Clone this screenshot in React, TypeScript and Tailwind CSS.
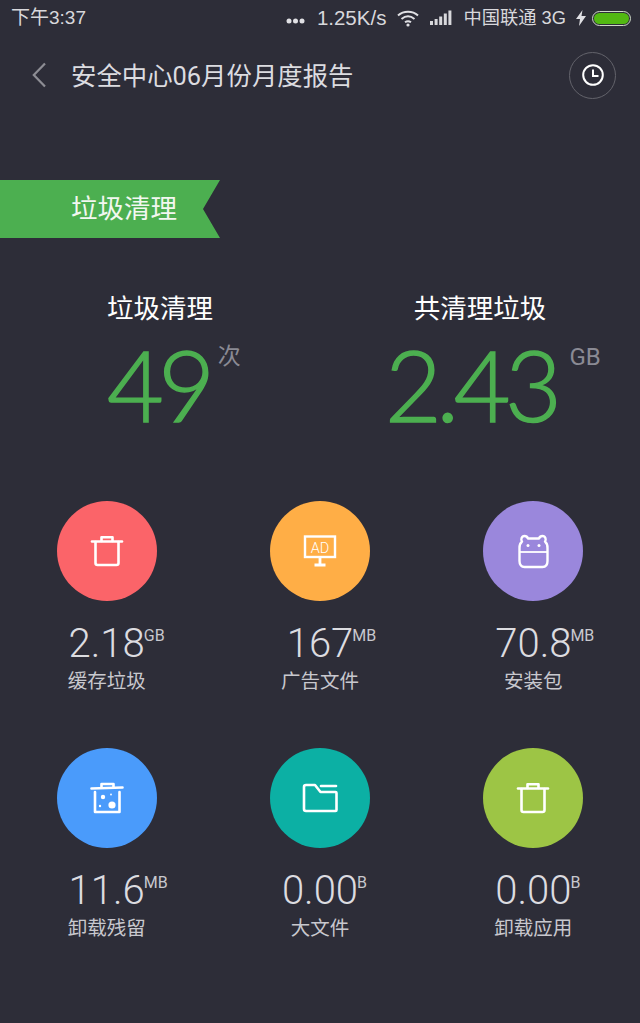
import { ReactNode } from "react";

function TrashIcon() {
  return (
    <svg width="34" height="34" viewBox="0 0 34 34" fill="none" stroke="#fff" strokeWidth="2.6" strokeLinejoin="round" strokeLinecap="round">
      <path d="M2 7.5h30" />
      <path d="M11.5 7V3.2h11V7" />
      <path d="M5.5 8v21a2 2 0 0 0 2 2h19a2 2 0 0 0 2-2V8" />
    </svg>
  );
}

function AdIcon() {
  return (
    <svg width="34" height="34" viewBox="0 0 34 34" fill="none">
      <rect x="2" y="2.5" width="30" height="20.5" stroke="#fff" strokeWidth="2.4" />
      <path d="M17 23v8M11.5 31h11" stroke="#fff" strokeWidth="2.8" />
      <text x="17" y="18.5" textAnchor="middle" fill="#fff" fontSize="14.5" fontFamily="Roboto, sans-serif" fontWeight="300">AD</text>
    </svg>
  );
}

function AndroidIcon() {
  return (
    <svg width="31" height="35" viewBox="0 0 31 35" fill="none" stroke="#fff" strokeWidth="2.4" strokeLinejoin="round">
      <path d="M4 7.5C2.5 6 3.5 2 6.5 2 8.5 2 9.5 3.2 10 4.5H21C21.5 3.2 22.5 2 24.5 2 27.5 2 28.5 6 27 7.5 28.8 9 29.5 11 29.5 14V27C29.5 31 27.5 33 24.5 33H6.5C3.5 33 1.5 31 1.5 27V14C1.5 11 2.2 9 4 7.5Z" />
      <path d="M1.5 18h28" strokeWidth="1.8" />
      <circle cx="10" cy="11.5" r="1.5" fill="#fff" stroke="none" />
      <circle cx="21" cy="11.5" r="1.5" fill="#fff" stroke="none" />
    </svg>
  );
}

function ResidueIcon() {
  return (
    <svg width="34" height="34" viewBox="0 0 34 34" fill="none" stroke="#fff" strokeWidth="2.6" strokeLinejoin="round" strokeLinecap="round">
      <path d="M1.5 7.5l31-1" />
      <path d="M11.5 6.5V3h12v3" />
      <path d="M5 11v20h24.5V11" />
      <circle cx="13" cy="16" r="2.2" fill="#fff" stroke="none" />
      <circle cx="22" cy="24" r="3.6" fill="#fff" stroke="none" />
      <circle cx="10" cy="25" r="1.2" fill="#fff" stroke="none" />
      <circle cx="21" cy="13.5" r="0.9" fill="#fff" stroke="none" />
    </svg>
  );
}

function FolderIcon() {
  return (
    <svg width="36" height="30" viewBox="0 0 36 30" fill="none" stroke="#fff" strokeWidth="2.6" strokeLinejoin="round" strokeLinecap="round">
      <path d="M2 4a2 2 0 0 1 2-2h9l5.5 7H33.5a1 1 0 0 1 1 1v17a1 1 0 0 1-1 1H4a2 2 0 0 1-2-2Z" />
      <path d="M19 3h15" />
    </svg>
  );
}

const items: { value: string; unit: string; label: string; color: string; icon: ReactNode }[] = [
  { value: "2.18", unit: "GB", label: "缓存垃圾", color: "bg-[#fb6469]", icon: <TrashIcon /> },
  { value: "167", unit: "MB", label: "广告文件", color: "bg-[#ffae46]", icon: <AdIcon /> },
  { value: "70.8", unit: "MB", label: "安装包", color: "bg-[#9a87dc]", icon: <AndroidIcon /> },
  { value: "11.6", unit: "MB", label: "卸载残留", color: "bg-[#4a9bfb]", icon: <ResidueIcon /> },
  { value: "0.00", unit: "B", label: "大文件", color: "bg-[#0cb0a4]", icon: <FolderIcon /> },
  { value: "0.00", unit: "B", label: "卸载应用", color: "bg-[#9dc545]", icon: <TrashIcon /> },
];

function StatusBar() {
  return (
    <div className="h-[36px] flex items-center pl-[11px] pr-[9px] text-[19px] text-[#d8d8dc] font-['Liberation_Sans','Noto_Sans_CJK_SC',sans-serif]">
      <span>下午3:37</span>
      <div className="ml-auto flex items-center">
        <svg width="19" height="6" viewBox="0 0 19 6" fill="#e0e0e4" className="mt-[5px]">
          <circle cx="3" cy="3" r="2.5" />
          <circle cx="9.5" cy="3" r="2.5" />
          <circle cx="16" cy="3" r="2.5" />
        </svg>
        <span className="ml-[12px] text-[20.5px]">1.25K/s</span>
        <svg width="22" height="17" viewBox="0 0 22 17" fill="none" stroke="#e0e0e4" strokeWidth="2" className="ml-[11px]">
          <path d="M1 5.5C6.5 .5 15.5 .5 21 5.5" />
          <path d="M4.5 9c4-3.3 9-3.3 13 0" />
          <path d="M8 12.2c2-1.4 4-1.4 6 0" />
          <circle cx="11" cy="15" r="1.6" fill="#e0e0e4" stroke="none" />
        </svg>
        <svg width="22" height="16" viewBox="0 0 22 16" fill="#d8d8dc" className="ml-[11px]">
          <rect x="0" y="11" width="3" height="4" />
          <rect x="4.6" y="9" width="3" height="6" />
          <rect x="9.2" y="6.5" width="3" height="8.5" />
          <rect x="13.8" y="3.5" width="3" height="11.5" />
          <rect x="18.4" y="0.5" width="3" height="14.5" />
        </svg>
        <span className="ml-[11px] text-[18.3px]">中国联通 3G</span>
        <svg width="10" height="16" viewBox="0 0 10 16" fill="#e0e0e4" className="ml-[10px]">
          <path d="M6.5 0 0 9h4l-1 7 7-10H5.5Z" />
        </svg>
        <div className="ml-[6px] w-[39px] h-[15px] rounded-full border border-[#cfd8c8] p-[1px]">
          <div className="w-full h-full rounded-full bg-[#52b812]" />
        </div>
      </div>
    </div>
  );
}

export default function App() {
  return (
    <div className="w-[640px] h-[1023px] overflow-hidden bg-[#2d2d38] text-[#dcdce0] font-['Roboto','Noto_Sans_CJK_SC',sans-serif]">
      <StatusBar />

      {/* Header */}
      <div className="h-[78px] flex items-center pl-[32px] pr-[24px]">
        <svg width="14" height="26" viewBox="0 0 14 26" fill="none" stroke="#8d8d94" strokeWidth="2.2">
          <path d="M13 1.5 1.8 13 13 24.5" />
        </svg>
        <h1 className="ml-[25px] mt-[2px] text-[25.4px] font-normal text-[#dcdce0]">安全中心06月份月度报告</h1>
        <div className="ml-auto w-[47px] h-[47px] rounded-full border border-[#63636b] flex items-center justify-center">
          <svg width="22" height="22" viewBox="0 0 22 22" fill="none" stroke="#fff" strokeWidth="2">
            <circle cx="11" cy="11" r="9.8" />
            <path d="M11 5.5V12h5.5" />
          </svg>
        </div>
      </div>

      {/* Ribbon */}
      <div className="mt-[66px] w-[220px] h-[58px] bg-[#4caf50] [clip-path:polygon(0_0,100%_0,203px_50%,100%_100%,0_100%)] flex items-center pl-[71px] text-[26.5px] text-[#f2f7f0]">
        垃圾清理
      </div>

      {/* Totals */}
      <div className="mt-[53px] grid grid-cols-2">
        <div className="flex flex-col">
          <div className="h-[36px] leading-[36px] text-center text-[26.5px] text-white">垃圾清理</div>
          <div className="flex pl-[107px] h-[110px]">
            <span className="mt-[2px] font-['Lato',sans-serif] font-light text-[98px] leading-[110px] text-[#4caf50] tracking-[-5.5px] [-webkit-text-stroke:1.5px_#4caf50]">49</span>
            <span className="ml-[8px] mt-[15px] text-[23px] leading-[30px] text-[#8a8a94]">次</span>
          </div>
        </div>
        <div className="flex flex-col">
          <div className="h-[36px] leading-[36px] text-center text-[26.5px] text-white">共清理垃圾</div>
          <div className="flex pl-[65px] h-[110px]">
            <span className="mt-[2px] font-['Lato',sans-serif] font-light text-[98px] leading-[110px] text-[#4caf50] tracking-[-5.5px] [-webkit-text-stroke:1.5px_#4caf50]">2.43</span>
            <span className="ml-[13px] mt-[15px] text-[24px] leading-[30px] text-[#8a8a94]">GB</span>
          </div>
        </div>
      </div>

      {/* Breakdown */}
      <div className="mt-[64px] grid grid-cols-3 gap-y-[52px]">
        {items.map((item) => (
          <div key={item.label} className="flex flex-col items-center">
            <div className={`w-[100px] h-[100px] rounded-full flex items-center justify-center ${item.color}`}>
              {item.icon}
            </div>
            <div className="mt-[20px] w-full grid grid-cols-[1fr_auto_1fr] h-[46px]">
              <span className="col-start-2 text-[40px] leading-[46px] font-light text-[#dcdce0]">{item.value}</span>
              <span className="text-[16px] leading-[20px] mt-[5px] -ml-[1px] font-normal text-[#c8c8ce]">{item.unit}</span>
            </div>
            <div className="mt-[1px] text-[19.5px] leading-[28px] text-[#c8c8ce]">{item.label}</div>
          </div>
        ))}
      </div>
    </div>
  );
}
